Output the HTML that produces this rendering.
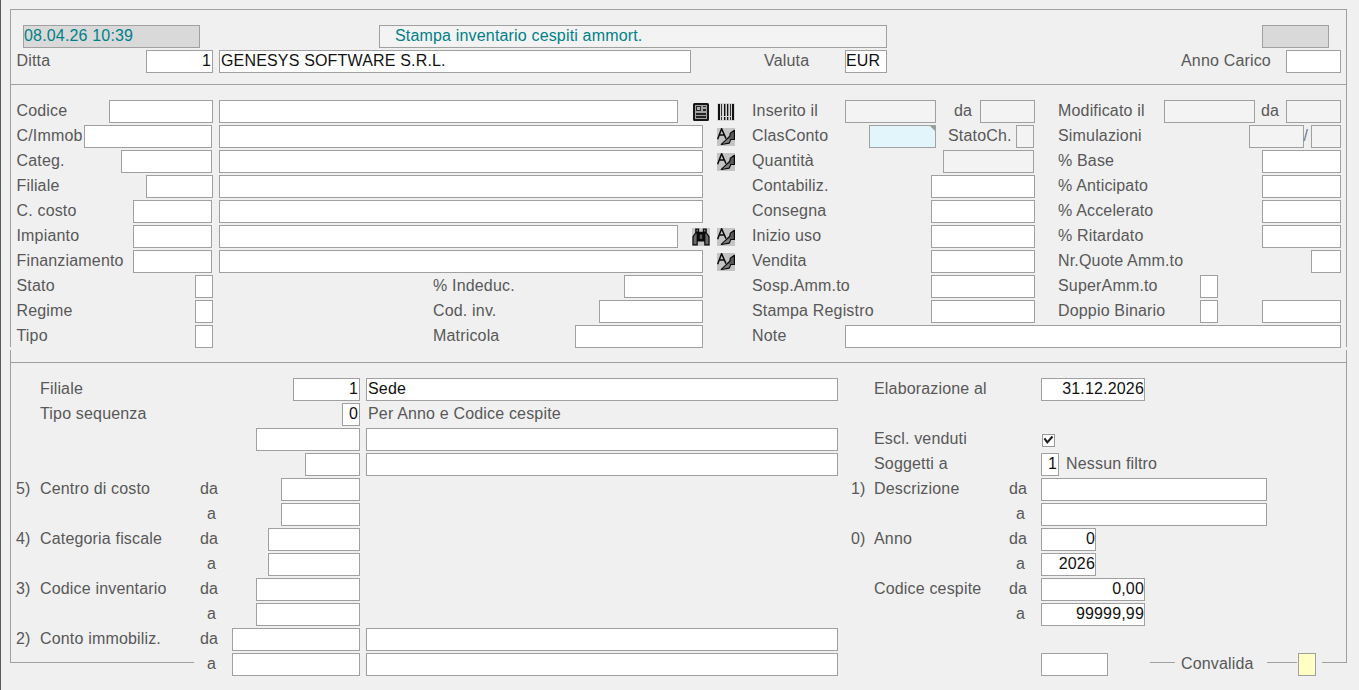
<!DOCTYPE html>
<html><head><meta charset="utf-8"><style>
html,body{margin:0;padding:0;}
body{width:1359px;height:690px;background:#f0f0f0;position:relative;overflow:hidden;font-family:"Liberation Sans",sans-serif;font-size:16px;}
.b{position:absolute;box-sizing:border-box;border:1px solid #a0a0a0;}
.t{position:absolute;white-space:nowrap;line-height:23px;height:23px;letter-spacing:0.17px;}
.l{position:absolute;}
.i{position:absolute;display:block;}
</style></head><body>
<div class="l" style="left:0px;top:0px;width:1px;height:690px;background:#5a5a5a"></div>
<div class="l" style="left:10px;top:9px;width:1337px;height:1px;background:#a0a0a0"></div>
<div class="l" style="left:10px;top:9px;width:1px;height:338px;background:#a0a0a0"></div>
<div class="l" style="left:1346px;top:9px;width:1px;height:338px;background:#a0a0a0"></div>
<div class="l" style="left:10px;top:84px;width:1337px;height:1px;background:#a0a0a0"></div>
<div class="l" style="left:10px;top:350px;width:1px;height:313px;background:#a0a0a0"></div>
<div class="l" style="left:1346px;top:350px;width:1px;height:313px;background:#a0a0a0"></div>
<div class="l" style="left:10px;top:362px;width:1337px;height:1px;background:#a0a0a0"></div>
<div class="l" style="left:10px;top:662px;width:184px;height:1px;background:#a0a0a0"></div>
<div class="l" style="left:1150px;top:662px;width:25px;height:1px;background:#a0a0a0"></div>
<div class="l" style="left:1267px;top:662px;width:30px;height:1px;background:#a0a0a0"></div>
<div class="l" style="left:1322px;top:662px;width:25px;height:1px;background:#a0a0a0"></div>
<div class="b" style="left:23px;top:25px;width:177px;height:23px;background:#d9d9d9;border-color:#a0a0a0;"></div>
<div class="t" style="left:24px;top:24px;color:#008089;">08.04.26 10:39</div>
<div class="b" style="left:379px;top:25px;width:508px;height:23px;background:#f3f3f3;border-color:#a0a0a0;"></div>
<div class="t" style="left:395px;top:24px;color:#008089;">Stampa inventario cespiti ammort.</div>
<div class="b" style="left:1262px;top:25px;width:67px;height:23px;background:#d9d9d9;border-color:#a0a0a0;"></div>
<div class="t" style="left:16.5px;top:49px;color:#585858;">Ditta</div>
<div class="b" style="left:146px;top:50px;width:67px;height:23px;background:#fff;border-color:#a0a0a0;"></div>
<div class="t" style="right:1148px;top:49px;color:#111;">1</div>
<div class="b" style="left:219px;top:50px;width:472px;height:23px;background:#fff;border-color:#a0a0a0;"></div>
<div class="t" style="left:221px;top:49px;color:#111;">GENESYS SOFTWARE S.R.L.</div>
<div class="t" style="left:764px;top:49px;color:#585858;">Valuta</div>
<div class="b" style="left:845px;top:50px;width:42px;height:23px;background:#fff;border-color:#a0a0a0;"></div>
<div class="t" style="left:846px;top:49px;color:#111;">EUR</div>
<div class="t" style="left:1181px;top:49px;color:#585858;">Anno Carico</div>
<div class="b" style="left:1286px;top:50px;width:55px;height:23px;background:#fff;border-color:#a0a0a0;"></div>
<div class="t" style="left:16.5px;top:99px;color:#585858;">Codice</div>
<div class="b" style="left:109px;top:100px;width:104px;height:23px;background:#fff;border-color:#a0a0a0;"></div>
<div class="b" style="left:219px;top:100px;width:459px;height:23px;background:#fff;border-color:#a0a0a0;"></div>
<div class="t" style="left:16.5px;top:124px;color:#585858;">C/Immob</div>
<div class="b" style="left:84px;top:125px;width:128px;height:23px;background:#fff;border-color:#a0a0a0;"></div>
<div class="b" style="left:219px;top:125px;width:484px;height:23px;background:#fff;border-color:#a0a0a0;"></div>
<div class="t" style="left:16.5px;top:149px;color:#585858;">Categ.</div>
<div class="b" style="left:121px;top:150px;width:91px;height:23px;background:#fff;border-color:#a0a0a0;"></div>
<div class="b" style="left:219px;top:150px;width:484px;height:23px;background:#fff;border-color:#a0a0a0;"></div>
<div class="t" style="left:16.5px;top:174px;color:#585858;">Filiale</div>
<div class="b" style="left:146px;top:175px;width:67px;height:23px;background:#fff;border-color:#a0a0a0;"></div>
<div class="b" style="left:219px;top:175px;width:484px;height:23px;background:#fff;border-color:#a0a0a0;"></div>
<div class="t" style="left:16.5px;top:199px;color:#585858;">C. costo</div>
<div class="b" style="left:133px;top:200px;width:79px;height:23px;background:#fff;border-color:#a0a0a0;"></div>
<div class="b" style="left:219px;top:200px;width:484px;height:23px;background:#fff;border-color:#a0a0a0;"></div>
<div class="t" style="left:16.5px;top:224px;color:#585858;">Impianto</div>
<div class="b" style="left:133px;top:225px;width:79px;height:23px;background:#fff;border-color:#a0a0a0;"></div>
<div class="b" style="left:219px;top:225px;width:459px;height:23px;background:#fff;border-color:#a0a0a0;"></div>
<div class="t" style="left:16.5px;top:249px;color:#585858;">Finanziamento</div>
<div class="b" style="left:133px;top:250px;width:79px;height:23px;background:#fff;border-color:#a0a0a0;"></div>
<div class="b" style="left:219px;top:250px;width:484px;height:23px;background:#fff;border-color:#a0a0a0;"></div>
<div class="t" style="left:16.5px;top:274px;color:#585858;">Stato</div>
<div class="b" style="left:195px;top:275px;width:18px;height:23px;background:#fff;border-color:#a0a0a0;"></div>
<div class="t" style="left:16.5px;top:299px;color:#585858;">Regime</div>
<div class="b" style="left:195px;top:300px;width:18px;height:23px;background:#fff;border-color:#a0a0a0;"></div>
<div class="t" style="left:16.5px;top:324px;color:#585858;">Tipo</div>
<div class="b" style="left:195px;top:325px;width:18px;height:23px;background:#fff;border-color:#a0a0a0;"></div>
<div class="t" style="left:433px;top:274px;color:#585858;">% Indeduc.</div>
<div class="b" style="left:624px;top:275px;width:79px;height:23px;background:#fff;border-color:#a0a0a0;"></div>
<div class="t" style="left:433px;top:299px;color:#585858;">Cod. inv.</div>
<div class="b" style="left:599px;top:300px;width:104px;height:23px;background:#fff;border-color:#a0a0a0;"></div>
<div class="t" style="left:433px;top:324px;color:#585858;">Matricola</div>
<div class="b" style="left:575px;top:325px;width:128px;height:23px;background:#fff;border-color:#a0a0a0;"></div>
<div class="t" style="left:752px;top:99px;color:#585858;">Inserito il</div>
<div class="t" style="left:752px;top:124px;color:#585858;">ClasConto</div>
<div class="t" style="left:752px;top:149px;color:#585858;">Quantità</div>
<div class="t" style="left:752px;top:174px;color:#585858;">Contabiliz.</div>
<div class="t" style="left:752px;top:199px;color:#585858;">Consegna</div>
<div class="t" style="left:752px;top:224px;color:#585858;">Inizio uso</div>
<div class="t" style="left:752px;top:249px;color:#585858;">Vendita</div>
<div class="t" style="left:752px;top:274px;color:#585858;">Sosp.Amm.to</div>
<div class="t" style="left:752px;top:299px;color:#585858;">Stampa Registro</div>
<div class="t" style="left:752px;top:324px;color:#585858;">Note</div>
<div class="b" style="left:845px;top:100px;width:91px;height:23px;background:#f3f3f3;border-color:#a0a0a0;"></div>
<div class="t" style="left:954px;top:99px;color:#585858;">da</div>
<div class="b" style="left:980px;top:100px;width:55px;height:23px;background:#f3f3f3;border-color:#a0a0a0;"></div>
<div class="b" style="left:869px;top:125px;width:67px;height:23px;background:#e1f5fa;border-color:#a0a0a0;"></div>
<div class="t" style="left:948px;top:124px;color:#585858;">StatoCh.</div>
<div class="b" style="left:1016px;top:125px;width:18px;height:23px;background:#f3f3f3;border-color:#a0a0a0;"></div>
<div class="l" style="left:930px;top:126px;width:0;height:0;border-left:5px solid transparent;border-top:5px solid #999;background:transparent"></div>
<div class="b" style="left:943px;top:150px;width:91px;height:23px;background:#f3f3f3;border-color:#a0a0a0;"></div>
<div class="b" style="left:931px;top:175px;width:104px;height:23px;background:#fff;border-color:#a0a0a0;"></div>
<div class="b" style="left:931px;top:200px;width:104px;height:23px;background:#fff;border-color:#a0a0a0;"></div>
<div class="b" style="left:931px;top:225px;width:104px;height:23px;background:#fff;border-color:#a0a0a0;"></div>
<div class="b" style="left:931px;top:250px;width:104px;height:23px;background:#fff;border-color:#a0a0a0;"></div>
<div class="b" style="left:931px;top:275px;width:104px;height:23px;background:#fff;border-color:#a0a0a0;"></div>
<div class="b" style="left:931px;top:300px;width:104px;height:23px;background:#fff;border-color:#a0a0a0;"></div>
<div class="b" style="left:845px;top:325px;width:496px;height:23px;background:#fff;border-color:#a0a0a0;"></div>
<div class="t" style="left:1058px;top:99px;color:#585858;">Modificato il</div>
<div class="t" style="left:1058px;top:124px;color:#585858;">Simulazioni</div>
<div class="t" style="left:1058px;top:149px;color:#585858;">% Base</div>
<div class="t" style="left:1058px;top:174px;color:#585858;">% Anticipato</div>
<div class="t" style="left:1058px;top:199px;color:#585858;">% Accelerato</div>
<div class="t" style="left:1058px;top:224px;color:#585858;">% Ritardato</div>
<div class="t" style="left:1058px;top:249px;color:#585858;">Nr.Quote Amm.to</div>
<div class="t" style="left:1058px;top:274px;color:#585858;">SuperAmm.to</div>
<div class="t" style="left:1058px;top:299px;color:#585858;">Doppio Binario</div>
<div class="b" style="left:1164px;top:100px;width:91px;height:23px;background:#f3f3f3;border-color:#a0a0a0;"></div>
<div class="t" style="left:1261px;top:99px;color:#585858;">da</div>
<div class="b" style="left:1286px;top:100px;width:55px;height:23px;background:#f3f3f3;border-color:#a0a0a0;"></div>
<div class="b" style="left:1249px;top:125px;width:55px;height:23px;background:#f3f3f3;border-color:#a0a0a0;"></div>
<div class="t" style="left:1303.5px;top:124px;color:#6c7a92;">/</div>
<div class="b" style="left:1311px;top:125px;width:30px;height:23px;background:#f3f3f3;border-color:#a0a0a0;"></div>
<div class="b" style="left:1262px;top:150px;width:79px;height:23px;background:#fff;border-color:#a0a0a0;"></div>
<div class="b" style="left:1262px;top:175px;width:79px;height:23px;background:#fff;border-color:#a0a0a0;"></div>
<div class="b" style="left:1262px;top:200px;width:79px;height:23px;background:#fff;border-color:#a0a0a0;"></div>
<div class="b" style="left:1262px;top:225px;width:79px;height:23px;background:#fff;border-color:#a0a0a0;"></div>
<div class="b" style="left:1311px;top:250px;width:30px;height:23px;background:#fff;border-color:#a0a0a0;"></div>
<div class="b" style="left:1200px;top:275px;width:18px;height:23px;background:#fff;border-color:#a0a0a0;"></div>
<div class="b" style="left:1200px;top:300px;width:18px;height:23px;background:#fff;border-color:#a0a0a0;"></div>
<div class="b" style="left:1262px;top:300px;width:79px;height:23px;background:#fff;border-color:#a0a0a0;"></div>
<svg class="i" style="left:693px;top:103px" width="16" height="18" viewBox="0 0 16 18"><rect x="1" y="1" width="14" height="16" rx="0.6" fill="#a2a2a2" stroke="#151515" stroke-width="2"/><rect x="3.5" y="3.5" width="4" height="4" fill="#b0b0b0" stroke="#2a2a2a" stroke-width="1"/><rect x="10" y="3" width="3" height="1" fill="#2a2a2a"/><rect x="10" y="6" width="3" height="2" fill="#2a2a2a"/><rect x="3" y="10" width="10" height="2" fill="#222"/><rect x="3" y="13" width="10" height="2" fill="#222"/></svg>
<svg class="i" style="left:717px;top:103px" width="18" height="18" viewBox="0 0 18 18"><rect x="0" y="0" width="18" height="18" fill="#d6d6d6"/><rect x="1" y="1" width="2" height="16" fill="#111"/><rect x="15" y="1" width="2" height="16" fill="#111"/><rect x="4" y="1" width="1" height="12" fill="#333"/><rect x="4" y="14" width="1" height="3" fill="#333"/><rect x="7" y="1" width="1.4" height="12" fill="#111"/><rect x="7" y="14" width="1.4" height="3" fill="#111"/><rect x="10" y="1" width="1.3" height="12" fill="#111"/><rect x="10" y="14" width="1.3" height="3" fill="#111"/><rect x="13" y="1" width="1" height="12" fill="#333"/><rect x="13" y="14" width="1" height="3" fill="#333"/></svg>
<svg class="i" style="left:717px;top:128px" width="18" height="18" viewBox="0 0 18 18"><rect x="0" y="0" width="18" height="18" fill="#c4c4c4"/><path d="M4.3 16.5 L9 12 L12.8 8.1 L13.3 5.3 L17.4 2.3 L17.4 11.5 L13.7 11.5 L12.3 15.1 Z" fill="#5a5a5a" stroke="#0a0a0a" stroke-width="1.2" stroke-linejoin="round"/><path d="M5.6 15.7 L9.3 12.6 L12.2 10.6 L12.9 11.9 L11.6 14.3 Z" fill="#808080"/><path d="M0.6 11.3 L4.6 0.7 L9 10.6 M2.6 6.9 L7.4 6.9" fill="none" stroke="#0a0a0a" stroke-width="1.5"/></svg>
<svg class="i" style="left:717px;top:153px" width="18" height="18" viewBox="0 0 18 18"><rect x="0" y="0" width="18" height="18" fill="#c4c4c4"/><path d="M4.3 16.5 L9 12 L12.8 8.1 L13.3 5.3 L17.4 2.3 L17.4 11.5 L13.7 11.5 L12.3 15.1 Z" fill="#5a5a5a" stroke="#0a0a0a" stroke-width="1.2" stroke-linejoin="round"/><path d="M5.6 15.7 L9.3 12.6 L12.2 10.6 L12.9 11.9 L11.6 14.3 Z" fill="#808080"/><path d="M0.6 11.3 L4.6 0.7 L9 10.6 M2.6 6.9 L7.4 6.9" fill="none" stroke="#0a0a0a" stroke-width="1.5"/></svg>
<svg class="i" style="left:717px;top:253px" width="18" height="18" viewBox="0 0 18 18"><rect x="0" y="0" width="18" height="18" fill="#c4c4c4"/><path d="M4.3 16.5 L9 12 L12.8 8.1 L13.3 5.3 L17.4 2.3 L17.4 11.5 L13.7 11.5 L12.3 15.1 Z" fill="#5a5a5a" stroke="#0a0a0a" stroke-width="1.2" stroke-linejoin="round"/><path d="M5.6 15.7 L9.3 12.6 L12.2 10.6 L12.9 11.9 L11.6 14.3 Z" fill="#808080"/><path d="M0.6 11.3 L4.6 0.7 L9 10.6 M2.6 6.9 L7.4 6.9" fill="none" stroke="#0a0a0a" stroke-width="1.5"/></svg>
<svg class="i" style="left:692px;top:228px" width="18" height="18" viewBox="0 0 18 18"><rect x="0" y="0" width="18" height="18" fill="#c8c8c8"/><path d="M3.2 0.4 H7.2 V3.8 H10.8 V0.4 H14.8 V4.4 L17.6 8.4 V17.6 H12.2 V13.4 H5.8 V17.6 H0.4 V8.4 L3.2 4.4 Z" fill="#0a0a0a"/><path d="M3.8 5.6 H4.6 V16.3 H1.6 V8.9 Z" fill="#6a6a6a"/><path d="M14.2 5.6 H13.4 V16.3 H16.4 V8.9 Z" fill="#6a6a6a"/><rect x="4.5" y="1.7" width="1.6" height="1.8" fill="#7a7a7a"/><rect x="11.9" y="1.7" width="1.6" height="1.8" fill="#7a7a7a"/><rect x="7.8" y="6.6" width="2.4" height="4.3" fill="#5a5a5a"/></svg>
<svg class="i" style="left:717px;top:228px" width="18" height="18" viewBox="0 0 18 18"><rect x="0" y="0" width="18" height="18" fill="#c4c4c4"/><path d="M4.3 16.5 L9 12 L12.8 8.1 L13.3 5.3 L17.4 2.3 L17.4 11.5 L13.7 11.5 L12.3 15.1 Z" fill="#5a5a5a" stroke="#0a0a0a" stroke-width="1.2" stroke-linejoin="round"/><path d="M5.6 15.7 L9.3 12.6 L12.2 10.6 L12.9 11.9 L11.6 14.3 Z" fill="#808080"/><path d="M0.6 11.3 L4.6 0.7 L9 10.6 M2.6 6.9 L7.4 6.9" fill="none" stroke="#0a0a0a" stroke-width="1.5"/></svg>
<div class="t" style="left:40px;top:377px;color:#585858;">Filiale</div>
<div class="b" style="left:293px;top:378px;width:67px;height:23px;background:#fff;border-color:#a0a0a0;"></div>
<div class="t" style="right:1001px;top:377px;color:#111;">1</div>
<div class="b" style="left:366px;top:378px;width:472px;height:23px;background:#fff;border-color:#a0a0a0;"></div>
<div class="t" style="left:368px;top:377px;color:#111;">Sede</div>
<div class="t" style="left:40px;top:402px;color:#585858;">Tipo sequenza</div>
<div class="b" style="left:342px;top:403px;width:18px;height:23px;background:#fff;border-color:#a0a0a0;"></div>
<div class="t" style="right:1001px;top:402px;color:#111;">0</div>
<div class="t" style="left:368px;top:402px;color:#585858;">Per Anno e Codice cespite</div>
<div class="b" style="left:256px;top:428px;width:104px;height:23px;background:#fff;border-color:#a0a0a0;"></div>
<div class="b" style="left:366px;top:428px;width:472px;height:23px;background:#fff;border-color:#a0a0a0;"></div>
<div class="b" style="left:305px;top:453px;width:55px;height:23px;background:#fff;border-color:#a0a0a0;"></div>
<div class="b" style="left:366px;top:453px;width:472px;height:23px;background:#fff;border-color:#a0a0a0;"></div>
<div class="t" style="left:16px;top:477px;color:#585858;">5)</div>
<div class="t" style="left:40px;top:477px;color:#585858;">Centro di costo</div>
<div class="t" style="left:200px;top:477px;color:#585858;">da</div>
<div class="t" style="left:207px;top:502px;color:#585858;">a</div>
<div class="b" style="left:281px;top:478px;width:79px;height:23px;background:#fff;border-color:#a0a0a0;"></div>
<div class="b" style="left:281px;top:503px;width:79px;height:23px;background:#fff;border-color:#a0a0a0;"></div>
<div class="t" style="left:16px;top:527px;color:#585858;">4)</div>
<div class="t" style="left:40px;top:527px;color:#585858;">Categoria fiscale</div>
<div class="t" style="left:200px;top:527px;color:#585858;">da</div>
<div class="t" style="left:207px;top:552px;color:#585858;">a</div>
<div class="b" style="left:268px;top:528px;width:92px;height:23px;background:#fff;border-color:#a0a0a0;"></div>
<div class="b" style="left:268px;top:553px;width:92px;height:23px;background:#fff;border-color:#a0a0a0;"></div>
<div class="t" style="left:16px;top:577px;color:#585858;">3)</div>
<div class="t" style="left:40px;top:577px;color:#585858;">Codice inventario</div>
<div class="t" style="left:200px;top:577px;color:#585858;">da</div>
<div class="t" style="left:207px;top:602px;color:#585858;">a</div>
<div class="b" style="left:256px;top:578px;width:104px;height:23px;background:#fff;border-color:#a0a0a0;"></div>
<div class="b" style="left:256px;top:603px;width:104px;height:23px;background:#fff;border-color:#a0a0a0;"></div>
<div class="t" style="left:16px;top:627px;color:#585858;">2)</div>
<div class="t" style="left:40px;top:627px;color:#585858;">Conto immobiliz.</div>
<div class="t" style="left:200px;top:627px;color:#585858;">da</div>
<div class="t" style="left:207px;top:652px;color:#585858;">a</div>
<div class="b" style="left:232px;top:628px;width:128px;height:23px;background:#fff;border-color:#a0a0a0;"></div>
<div class="b" style="left:232px;top:653px;width:128px;height:23px;background:#fff;border-color:#a0a0a0;"></div>
<div class="b" style="left:366px;top:628px;width:472px;height:23px;background:#fff;border-color:#a0a0a0;"></div>
<div class="b" style="left:366px;top:653px;width:472px;height:23px;background:#fff;border-color:#a0a0a0;"></div>
<div class="t" style="left:874px;top:377px;color:#585858;">Elaborazione al</div>
<div class="b" style="left:1041px;top:378px;width:104px;height:23px;background:#fff;border-color:#a0a0a0;"></div>
<div class="t" style="right:215px;top:377px;color:#111;">31.12.2026</div>
<div class="t" style="left:874px;top:427px;color:#585858;">Escl. venduti</div>
<div class="t" style="left:874px;top:452px;color:#585858;">Soggetti a</div>
<div class="b" style="left:1041px;top:453px;width:18px;height:23px;background:#fff;border-color:#a0a0a0;"></div>
<div class="t" style="right:302px;top:452px;color:#111;">1</div>
<div class="t" style="left:1066px;top:452px;color:#585858;">Nessun filtro</div>
<div class="t" style="left:851px;top:477px;color:#585858;">1)</div>
<div class="t" style="left:874px;top:477px;color:#585858;">Descrizione</div>
<div class="t" style="left:1009px;top:477px;color:#585858;">da</div>
<div class="t" style="left:1016px;top:502px;color:#585858;">a</div>
<div class="b" style="left:1041px;top:478px;width:226px;height:23px;background:#fff;border-color:#a0a0a0;"></div>
<div class="b" style="left:1041px;top:503px;width:226px;height:23px;background:#fff;border-color:#a0a0a0;"></div>
<div class="t" style="left:851px;top:527px;color:#585858;">0)</div>
<div class="t" style="left:874px;top:527px;color:#585858;">Anno</div>
<div class="t" style="left:1009px;top:527px;color:#585858;">da</div>
<div class="t" style="left:1016px;top:552px;color:#585858;">a</div>
<div class="b" style="left:1041px;top:528px;width:55px;height:23px;background:#fff;border-color:#a0a0a0;"></div>
<div class="t" style="right:264px;top:527px;color:#111;">0</div>
<div class="b" style="left:1041px;top:553px;width:55px;height:23px;background:#fff;border-color:#a0a0a0;"></div>
<div class="t" style="right:264px;top:552px;color:#111;">2026</div>
<div class="t" style="left:874px;top:577px;color:#585858;">Codice cespite</div>
<div class="t" style="left:1009px;top:577px;color:#585858;">da</div>
<div class="t" style="left:1016px;top:602px;color:#585858;">a</div>
<div class="b" style="left:1041px;top:578px;width:104px;height:23px;background:#fff;border-color:#a0a0a0;"></div>
<div class="t" style="right:215px;top:577px;color:#111;">0,00</div>
<div class="b" style="left:1041px;top:603px;width:104px;height:23px;background:#fff;border-color:#a0a0a0;"></div>
<div class="t" style="right:215px;top:602px;color:#111;">99999,99</div>
<div class="b" style="left:1041px;top:653px;width:67px;height:23px;background:#fff;border-color:#a0a0a0;"></div>
<div class="t" style="left:1181px;top:652px;color:#585858;">Convalida</div>
<div class="b" style="left:1298px;top:653px;width:18px;height:23px;background:#ffffc6;border-color:#a0a0a0;"></div>
<svg class="i" style="left:1042px;top:434px" width="13" height="13" viewBox="0 0 13 13"><rect x="0.5" y="0.5" width="12" height="12" fill="#fff" stroke="#999"/><path d="M2.4 4.4 L5.3 8.4 L10.5 2.5" fill="none" stroke="#1e1e1e" stroke-width="2.1"/></svg>
</body></html>
